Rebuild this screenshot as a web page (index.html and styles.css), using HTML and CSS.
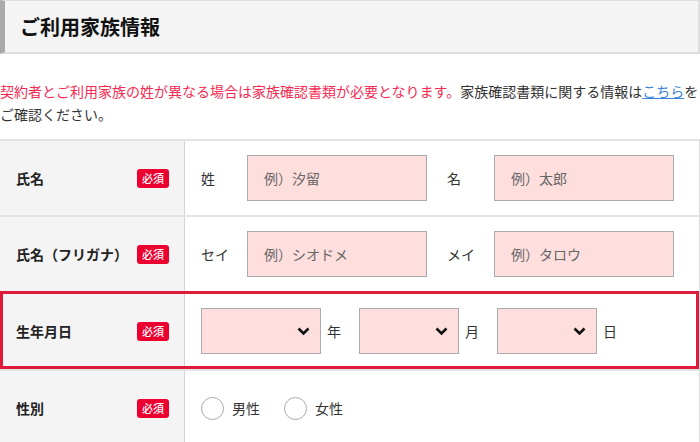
FILE: index.html
```html
<!DOCTYPE html>
<html lang="ja">
<head>
    <meta charset="UTF-8">
    <meta name="viewport" content="width=device-width, initial-scale=1.0">
    <title>ご利用家族情報</title>
    <link rel="stylesheet" href="styles.css">
</head>
<body>
    <div class="section-head">
        <h2>ご利用家族情報</h2>
    </div>

    <p class="notice"><span class="warn">契約者とご利用家族の姓が異なる場合は家族確認書類が必要となります。</span>家族確認書類に関する情報は<a href="#">こちら</a>をご確認ください。</p>

    <div class="form-table">
        <div class="row">
            <div class="label"><span>氏名</span><span class="required">必須</span></div>
            <div class="field">
                <span class="sub">姓</span>
                <input type="text" class="text" placeholder="例）汐留">
                <span class="sub next">名</span>
                <input type="text" class="text" placeholder="例）太郎">
            </div>
        </div>

        <div class="row">
            <div class="label"><span>氏名（フリガナ）</span><span class="required">必須</span></div>
            <div class="field">
                <span class="sub">セイ</span>
                <input type="text" class="text" placeholder="例）シオドメ">
                <span class="sub next">メイ</span>
                <input type="text" class="text" placeholder="例）タロウ">
            </div>
        </div>

        <div class="row error">
            <div class="label"><span>生年月日</span><span class="required">必須</span></div>
            <div class="field">
                <span class="select year">
                    <select><option></option></select>
                    <svg width="13" height="9" viewBox="0 0 13 9"><path d="M1.5 1.5 L6.5 6.5 L11.5 1.5" fill="none" stroke="#111" stroke-width="2.6"/></svg>
                </span>
                <span class="unit">年</span>
                <span class="select">
                    <select><option></option></select>
                    <svg width="13" height="9" viewBox="0 0 13 9"><path d="M1.5 1.5 L6.5 6.5 L11.5 1.5" fill="none" stroke="#111" stroke-width="2.6"/></svg>
                </span>
                <span class="unit">月</span>
                <span class="select">
                    <select><option></option></select>
                    <svg width="13" height="9" viewBox="0 0 13 9"><path d="M1.5 1.5 L6.5 6.5 L11.5 1.5" fill="none" stroke="#111" stroke-width="2.6"/></svg>
                </span>
                <span class="unit">日</span>
            </div>
        </div>

        <div class="row">
            <div class="label"><span>性別</span><span class="required">必須</span></div>
            <div class="field">
                <label class="radio"><input type="radio" name="sex">男性</label>
                <label class="radio"><input type="radio" name="sex">女性</label>
            </div>
        </div>
    </div>
</body>
</html>
```

FILE: styles.css
```css
body {
    margin: 0;
    padding: 0;
    width: 700px;
    font-family: "Noto Sans CJK JP", "Noto Sans", sans-serif;
    color: #333;
    background: #fff;
}
.section-head {
    height: 51px;
    background: #f4f4f4;
    border-top: 1px solid #dedede;
    border-right: 2px solid #dedede;
    border-bottom: 2px solid #dedede;
    border-left: 5px solid #aaa;
    padding-left: 15px;
    display: flex;
    align-items: center;
}
.section-head h2 {
    margin: 0;
    font-size: 20px;
    font-weight: 700;
    color: #111;
}
.notice {
    margin: 26px 0 13px;
    font-size: 14px;
    line-height: 23px;
    color: #333;
}
.warn {
    color: #f72a52;
}
.notice a {
    color: #3b86d9;
}
.form-table {
    border-right: 1px solid #dcdcdc;
    border-bottom: 2px solid #e3e3e3;
}
.row {
    display: flex;
    border-top: 2px solid #e3e3e3;
    min-height: 74px;
}
.row.error {
    min-height: 76px;
    outline: 3px solid #e01a3a;
    outline-offset: -3px;
}
.label {
    width: 185px;
    flex-shrink: 0;
    padding: 0 15px 0 16px;
    background: #f4f4f4;
    border-right: 1px solid #d4d4d4;
    display: flex;
    align-items: center;
    justify-content: space-between;
    font-size: 14px;
    font-weight: 700;
    color: #222;
    box-sizing: border-box;
}
.required {
    background: #ec0030;
    color: #fff;
    font-size: 11px;
    font-weight: 500;
    width: 32px;
    height: 19px;
    line-height: 19px;
    text-align: center;
    border-radius: 3px;
}
.field {
    flex: 1;
    display: flex;
    align-items: center;
    padding-left: 16px;
    font-size: 14px;
    color: #333;
}
.sub {
    width: 46px;
}
.sub.next {
    margin-left: 20px;
    width: 47px;
}
.text {
    width: 180px;
    height: 46px;
    box-sizing: border-box;
    border: 1px solid #aaa;
    background: #ffdede;
    padding: 0 16px;
    font-family: inherit;
    font-size: 14px;
    color: #333;
}
.text::placeholder {
    color: #666;
}
.select {
    position: relative;
    display: inline-block;
}
.select select {
    appearance: none;
    -webkit-appearance: none;
    width: 100px;
    height: 46px;
    border: 1px solid #aaa;
    border-radius: 0;
    background: #ffdede;
    font-family: inherit;
    display: block;
}
.select.year select {
    width: 120px;
}
.select svg {
    position: absolute;
    right: 11px;
    top: 19px;
}
.unit {
    margin: 0 18px 0 6px;
}
.radio {
    display: flex;
    align-items: center;
    margin-right: 24px;
}
.radio input {
    appearance: none;
    -webkit-appearance: none;
    margin: 0 8px 0 0;
    width: 23px;
    height: 23px;
    border: 1px solid #aaa;
    border-radius: 50%;
    background: #fff;
}
```
